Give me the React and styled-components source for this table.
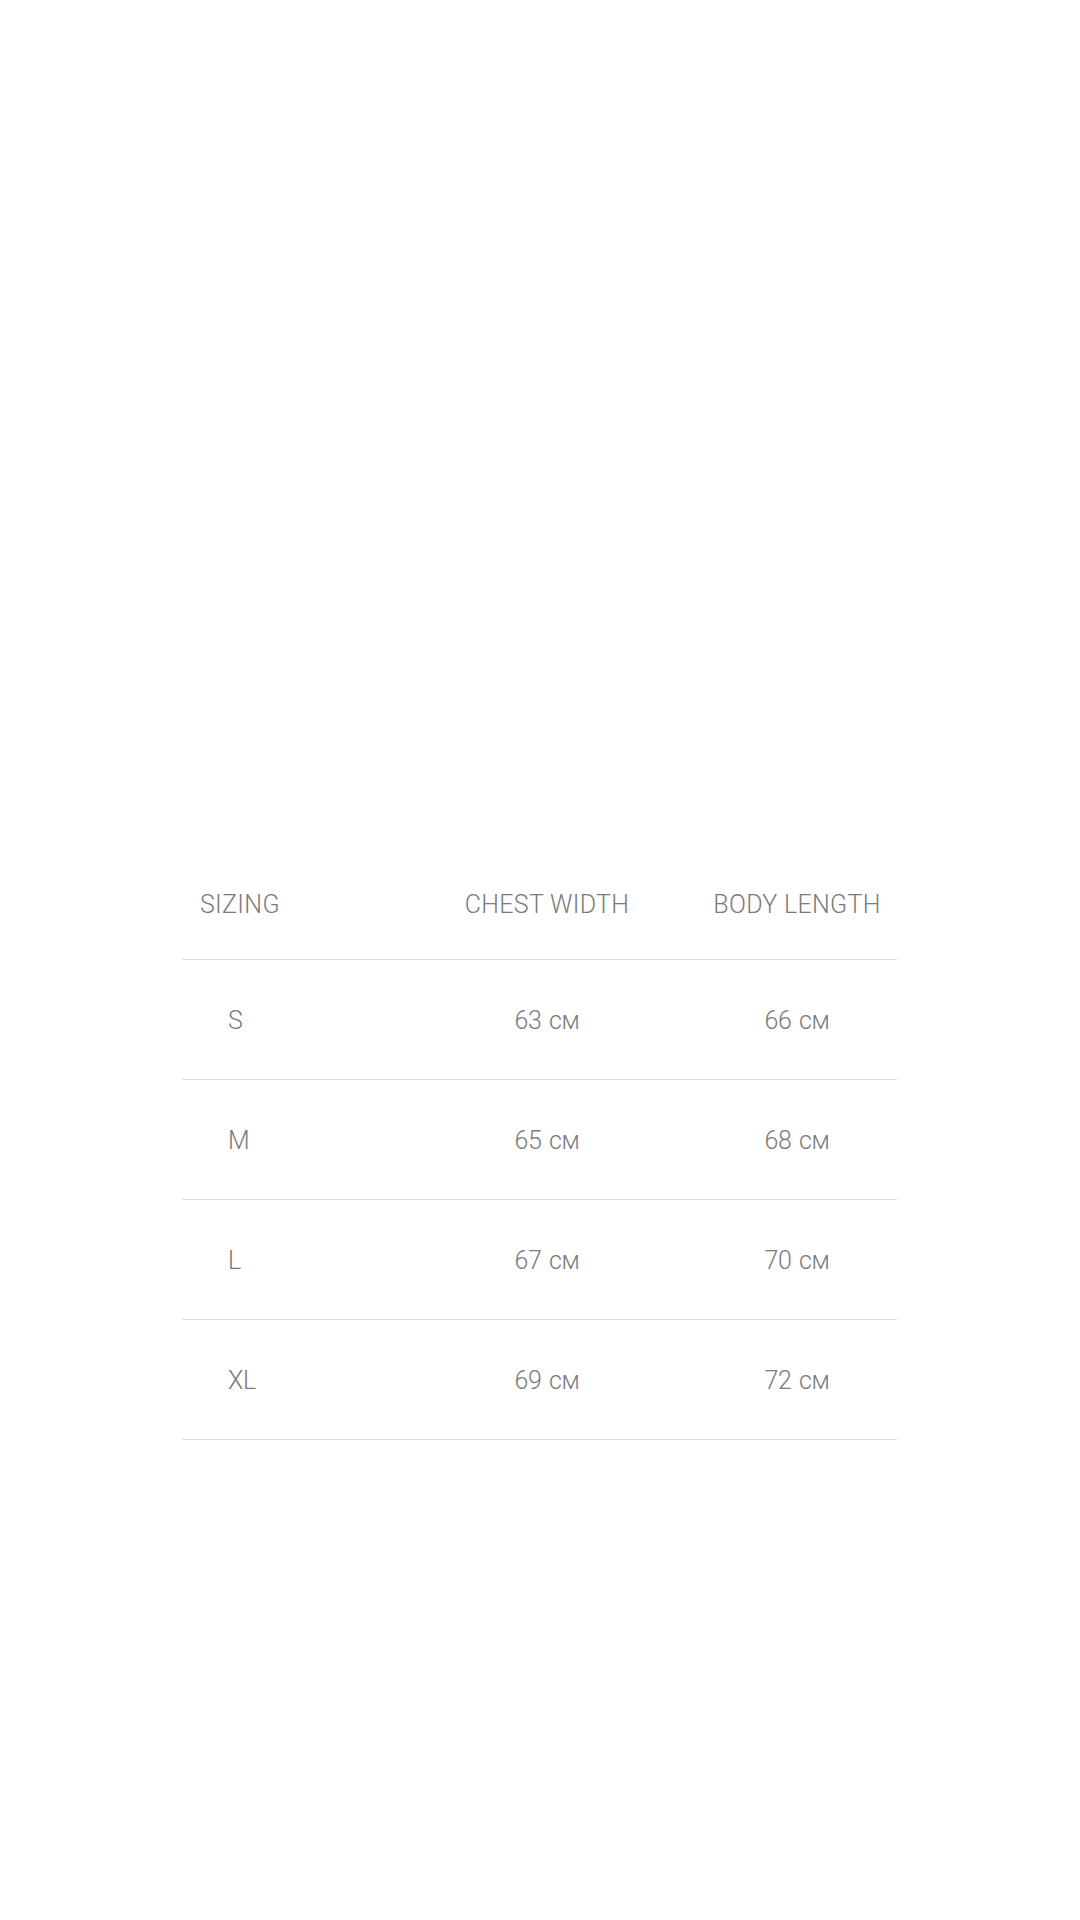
import React from 'react';
import styled, { createGlobalStyle } from 'styled-components';

const GlobalStyle = createGlobalStyle`
  html, body {
    margin: 0;
    padding: 0;
    background: #ffffff;
  }
  body {
    font-family: Roboto, "Liberation Sans", Arial, sans-serif;
    -webkit-font-smoothing: antialiased;
  }
`;

const StyledPage = styled.div`
  width: 1080px;
  min-height: 1920px;
  box-sizing: border-box;
  padding: 849px 183px 0 182px;
  background: #ffffff;
`;

const StyledTable = styled.div`
  display: flex;
  flex-direction: column;
  width: 715px;
`;

const StyledRow = styled.div`
  display: grid;
  grid-template-columns: 215px 300px 1fr;
  align-items: center;
  height: ${({ $header }) => ($header ? '110px' : '117px')};
  padding-top: ${({ $header }) => ($header ? '0' : '2px')};
  border-bottom: 1px solid #dcdcdc;
`;

const StyledCell = styled.div`
  font-size: 25px;
  font-weight: 300;
  color: #7b7b7b;
  letter-spacing: ${({ $header }) => ($header ? '0.3px' : '-0.4px')};
  word-spacing: ${({ $header }) => ($header ? '0' : '2px')};
  white-space: nowrap;
  text-align: ${({ $first }) => ($first ? 'left' : 'center')};
  padding-left: ${({ $first, $header }) =>
    $first ? ($header ? '18px' : '46px') : '0'};
`;

const rows = [
  { size: 'S', chest: '63', body: '66' },
  { size: 'M', chest: '65', body: '68' },
  { size: 'L', chest: '67', body: '70' },
  { size: 'XL', chest: '69', body: '72' },
];

const App = () => {
  return (
    <StyledPage>
      <GlobalStyle />
      <StyledTable>
        <StyledRow $header>
          <StyledCell $first $header>SIZING</StyledCell>
          <StyledCell $header>CHEST WIDTH</StyledCell>
          <StyledCell $header>BODY LENGTH</StyledCell>
        </StyledRow>
        {rows.map((row) => (
          <StyledRow key={row.size}>
            <StyledCell $first>{row.size}</StyledCell>
            <StyledCell>{row.chest} см</StyledCell>
            <StyledCell>{row.body} см</StyledCell>
          </StyledRow>
        ))}
      </StyledTable>
    </StyledPage>
  );
};

export default App;
